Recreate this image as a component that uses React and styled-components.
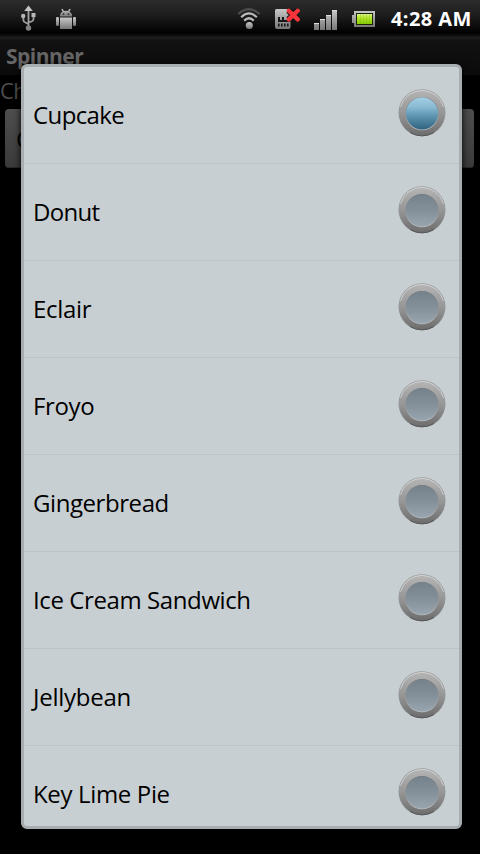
import React from "react";
import styled, { createGlobalStyle } from "styled-components";

const GlobalStyle = createGlobalStyle`
  body {
    margin: 0;
    background: #000;
    font-family: "Open Sans", "Noto Sans", sans-serif;
  }
`;

const Screen = styled.div`
  position: relative;
  width: 480px;
  height: 854px;
  overflow: hidden;
  background: #000;
`;

const StatusBar = styled.header`
  display: flex;
  align-items: center;
  justify-content: space-between;
  box-sizing: border-box;
  height: 38px;
  padding: 0 9px 0 20px;
  background: linear-gradient(#2b2b2b 0, #202020 13px, #0b0b0b 27px, #000 33px, #0c0c0c 35px, #202020 38px);
`;

const IconGroup = styled.div`
  display: flex;
  align-items: center;
  gap: ${(p) => p.$gap}px;
  svg {
    display: block;
  }
`;

const Clock = styled.time`
  width: 80px;
  margin-left: 2px;
  color: #fff;
  font-size: 20px;
  line-height: 38px;
  font-weight: 700;
  white-space: nowrap;
  letter-spacing: 0.4px;
`;

const TitleBar = styled.div`
  box-sizing: border-box;
  height: 37px;
  padding-left: 6px;
  background: linear-gradient(#1b1b1b, #111 3px, #0b0b0b);
  color: #656565;
  font-size: 21px;
  line-height: 37px;
  font-weight: 700;
  letter-spacing: -0.5px;
`;

const Prompt = styled.div`
  height: 34px;
  color: #4c4c4c;
  font-size: 22px;
  line-height: 31px;
  letter-spacing: -0.6px;
`;

const SpinnerButton = styled.div`
  box-sizing: border-box;
  height: 59px;
  margin: 0 6px 0 5px;
  padding-left: 11px;
  border-radius: 4px;
  background: linear-gradient(#4e4e4e, #3a3a3a);
  box-shadow: inset 0 -1px #292929;
  color: #000;
  font-size: 24px;
  line-height: 60px;
`;

const Dialog = styled.div`
  position: absolute;
  left: 21px;
  top: 64px;
  box-sizing: border-box;
  width: 441px;
  height: 765px;
  overflow: hidden;
  border: 3px solid #a7adb1;
  border-radius: 6px;
  background: #c8cfd2;
  box-shadow: 0 2px 7px #000;
`;

const Option = styled.div`
  display: flex;
  align-items: flex-start;
  justify-content: space-between;
  box-sizing: border-box;
  height: 97px;
  padding: 21px 13px 0 9px;
  border-bottom: 1px solid #bdc2c5;
`;

const Label = styled.span`
  color: #000;
  font-size: 24px;
  line-height: 54px;
  white-space: nowrap;
  letter-spacing: ${(p) => p.$tracking}px;
`;

const RadioSvg = styled.svg`
  display: block;
  width: 49px;
  height: 50px;
`;

function Radio({ checked }) {
  return (
    <RadioSvg viewBox="0 0 49 50">
      <circle cx="25" cy="24.8" r="23.5" fill="#6c7072" opacity=".6" />
      <circle cx="25" cy="24.8" r="23" fill="url(#ring)" />
      <path d="M3.5 18.8A22.300 22.300 0 0 1 46.5 18.8" fill="none" stroke="#dedede" strokeWidth="1" opacity=".7" />
      <path d="M13 44.500A23 23 0 0 0 37 44.500" fill="none" stroke="#555" strokeWidth="1" />
      <circle cx="25" cy="25.6" r="16.7" fill="url(#rim)" />
      <circle cx="25" cy="25.3" r="16.1" fill={checked ? "url(#lit)" : "url(#dim)"} />
    </RadioSvg>
  );
}

function Gradients() {
  const make = (id, stops) => (
    <linearGradient id={id} x1="0" y1="0" x2="0" y2="1">
      {stops.map(([offset, color]) => (
        <stop key={offset} offset={offset} stopColor={color} />
      ))}
    </linearGradient>
  );
  return (
    <defs>
      {make("ring", [[0, "#b5b5b5"], [0.5, "#979797"], [1, "#6c6c6c"]])}
      {make("rim", [[0, "#727577"], [0.5, "#8d9194"], [1, "#b9bec1"]])}
      {make("lit", [[0, "#a4cfe5"], [0.3, "#8abbd4"], [0.6, "#5c93af"], [1, "#2f627e"]])}
      {make("dim", [[0, "#75828b"], [0.5, "#83909a"], [1, "#98a5af"]])}
      {make("metal", [[0, "#c8c8c8"], [1, "#777"]])}
      {make("green", [[0, "#e0f58e"], [0.35, "#b6e82e"], [1, "#86cc00"]])}
    </defs>
  );
}

const UsbIcon = () => (
  <svg width="17" height="38" viewBox="0 0 17 38">
    <Gradients />
    <path d="M8.500 9v18M3.400 16v4q0 2 2 2.500l3 1.500M13.500 15v4q0 2-2 2.500l-3 1" fill="none" stroke="#a0a0a0" strokeWidth="1.800" />
    <path d="M8.500 5.500l4.300 5.500H4.200z" fill="#c4c4c4" />
    <circle cx="3.200" cy="16" r="2.200" fill="#b4b4b4" />
    <path d="M11.500 13h4v4h-4z" fill="#b8b8b8" />
    <circle cx="8.500" cy="28" r="2.700" fill="#808080" />
  </svg>
);

const AndroidIcon = () => (
  <svg width="20" height="38" viewBox="0 0 20 38">
    <g fill="url(#metal)">
      <path d="M4 16.5a6 5.500 0 0 1 2.600-4.900L5.200 9.500l1.200-.8 1.700 2.400q1.900-.5 3.800 0l1.700-2.400 1.200.8-1.400 2.100a6 5.500 0 0 1 2.600 4.900z" />
      <path d="M4 17.500h12V29H4z" />
      <rect x="0" y="17" width="3" height="9" rx="1.200" />
      <rect x="17" y="17" width="3" height="9" rx="1.200" />
    </g>
    <path d="M6.700 13.200h1.600v1.500H6.700zM11.700 13.200h1.600v1.500h-1.600z" fill="#222" />
  </svg>
);

const WifiIcon = () => (
  <svg width="24" height="38" viewBox="0 0 24 38">
    <g fill="none">
      <path d="M1.200 14Q12 4.500 22.800 14" stroke="#4c4c4c" strokeWidth="2.200" />
      <path d="M4.200 17.200Q12 9.700 19.800 17.200" stroke="#bbb" strokeWidth="2.200" />
      <path d="M7.200 20.600Q12 15.900 16.800 20.600" stroke="#bbb" strokeWidth="2.200" />
    </g>
    <circle cx="12.300" cy="25.500" r="3.500" fill="url(#metal)" />
  </svg>
);

const SimIcon = () => (
  <svg width="25" height="38" viewBox="0 0 25 38">
    <path d="M0 10.500Q0 9 1.500 9H15.500V27Q15.500 29 13.500 29H2Q0 29 0 27z" fill="url(#metal)" />
    <path d="M3 17h2v3h2v-3h2v3h6v2H3zM3 23.500h1.600v3H3zM6 23.500h1.600v3H6zM9 23.500h1.600v3H9zM12 23.500h1.600v3H12z" fill="#161616" />
    <path d="M13.500 10.500l9.200 9M22.700 10.500l-9.200 9" stroke="#111" strokeWidth="6" />
    <path d="M13.800 10.700l8.900 8.700M22.700 10.700l-8.900 8.700" stroke="#f8353b" strokeWidth="4.300" strokeLinecap="round" />
  </svg>
);

const SignalIcon = () => (
  <svg width="23" height="38" viewBox="0 0 23 38" shapeRendering="crispEdges">
    <path d="M0 23h5v7H0zM6 19h5v11H6zM12 15h5v15h-5zM18 10h5v20h-5z" fill="url(#metal)" />
    <path d="M0 23h5v1H0zM6 19h5v1H6zM12 15h5v1h-5zM18 10h5v1h-5z" fill="#ddd" />
  </svg>
);

const BatteryIcon = () => (
  <svg width="24" height="38" viewBox="-1 0 24 38" shapeRendering="crispEdges">
    <path d="M2 11h21v16H2v-4H0v-8h2z" fill="url(#metal)" />
    <path d="M4 13h17v12H4z" fill="#1b2309" />
    <path d="M5 14h15v10H5z" fill="url(#green)" />
    <path d="M8 14v10M11 14v10M14 14v10M17 14v10" stroke="#729f18" opacity=".25" />
  </svg>
);

const OPTIONS = [
  { name: "Cupcake", tracking: -0.6 },
  { name: "Donut", tracking: -0.7 },
  { name: "Eclair", tracking: -0.3 },
  { name: "Froyo", tracking: -0.35 },
  { name: "Gingerbread", tracking: -0.43 },
  { name: "Ice Cream Sandwich", tracking: -0.4 },
  { name: "Jellybean", tracking: -0.25 },
  { name: "Key Lime Pie", tracking: -0.35 },
];

export default function App() {
  return (
    <Screen>
      <GlobalStyle />
      <StatusBar>
        <IconGroup $gap={19}>
          <UsbIcon />
          <AndroidIcon />
        </IconGroup>
        <IconGroup $gap={14}>
          <WifiIcon />
          <SimIcon />
          <SignalIcon />
          <BatteryIcon />
          <Clock>4:28 AM</Clock>
        </IconGroup>
      </StatusBar>
      <TitleBar>Spinner</TitleBar>
      <Prompt>Ch</Prompt>
      <SpinnerButton>C</SpinnerButton>
      <Dialog>
        {OPTIONS.map(({ name, tracking }, i) => (
          <Option key={name}>
            <Label $tracking={tracking}>{name}</Label>
            <Radio checked={i === 0} />
          </Option>
        ))}
      </Dialog>
    </Screen>
  );
}
